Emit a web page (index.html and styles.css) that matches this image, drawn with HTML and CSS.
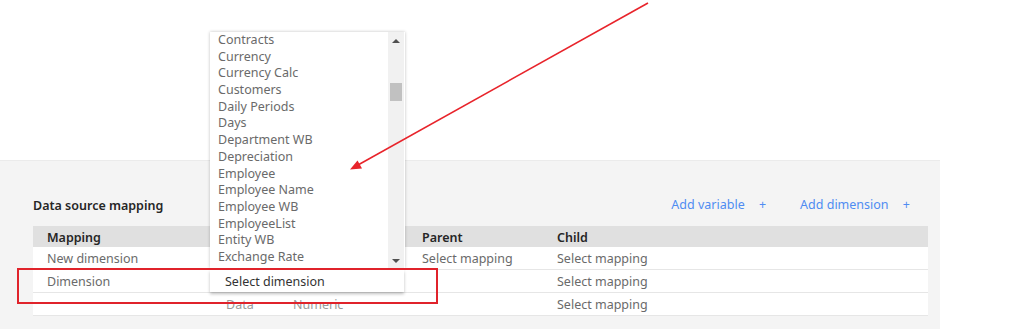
FILE: index.html
```html
<!DOCTYPE html>
<html lang="en">
<head>
    <meta charset="UTF-8">
    <meta name="viewport" content="width=device-width, initial-scale=1.0">
    <title>Data source mapping</title>
    <link rel="stylesheet" href="styles.css">
</head>
<body>

    <div class="page">
        <div class="panel">
            <div class="panel-head">
                <h2>Data source mapping</h2>
                <div class="actions">
                    <a class="add-link">Add variable <span class="plus">+</span></a>
                    <a class="add-link">Add dimension <span class="plus">+</span></a>
                </div>
            </div>

            <div class="mapping-table">
                <div class="row header">
                    <div>Mapping</div>
                    <div></div>
                    <div></div>
                    <div>Parent</div>
                    <div>Child</div>
                </div>
                <div class="row">
                    <div>New dimension</div>
                    <div></div>
                    <div></div>
                    <div>Select mapping</div>
                    <div>Select mapping</div>
                </div>
                <div class="row">
                    <div>Dimension</div>
                    <div></div>
                    <div></div>
                    <div></div>
                    <div>Select mapping</div>
                </div>
                <div class="row faded">
                    <div></div>
                    <div>Data</div>
                    <div>Numeric</div>
                    <div></div>
                    <div class="plain">Select mapping</div>
                </div>
            </div>
        </div>
    </div>

    <!-- Opened dimension dropdown -->
    <div class="dropdown-list">
        <ul>
            <li>Contracts</li>
            <li>Currency</li>
            <li>Currency Calc</li>
            <li>Customers</li>
            <li>Daily Periods</li>
            <li>Days</li>
            <li>Department WB</li>
            <li>Depreciation</li>
            <li>Employee</li>
            <li>Employee Name</li>
            <li>Employee WB</li>
            <li>EmployeeList</li>
            <li>Entity WB</li>
            <li>Exchange Rate</li>
            <li>Exchange Rate Type</li>
        </ul>
        <div class="scrollbar">
            <span class="arrow-up"></span>
            <span class="thumb"></span>
            <span class="arrow-down"></span>
        </div>
    </div>
    <div class="dropdown-select">Select dimension</div>

    <!-- Annotation -->
    <div class="highlight-box"></div>
    <svg class="annotation" width="1024" height="329" viewBox="0 0 1024 329">
        <line x1="648" y1="3" x2="358" y2="165" stroke="#e8242b" stroke-width="1.6"/>
        <polygon points="350,169.5 357.5,160.5 362,168.5" fill="#e8242b"/>
    </svg>

</body>
</html>
```

FILE: styles.css
```css
/* Page */
body {
    margin: 0;
    background-color: #fff;
    font-family: "Noto Sans", Arial, sans-serif;
    font-size: 12.5px;
    color: #6a6a6a;
    width: 1024px;
    height: 329px;
    overflow: hidden;
    position: relative;
}

.page {
    padding-top: 160px;
}

.panel {
    width: 940px;
    height: 169px;
    background-color: #f4f4f4;
    border-top: 1px solid #ebebeb;
    box-sizing: border-box;
    padding: 0 12px 0 33px;
}

.panel-head {
    display: flex;
    justify-content: space-between;
    align-items: center;
    height: 65px;
}

.panel-head h2 {
    margin: 23px 0 0;
    font-size: 12.5px;
    font-weight: 600;
    color: #262626;
}

.actions {
    display: flex;
    gap: 34px;
    margin: 22px 18px 0 0;
}

.add-link {
    color: #4f8cf2;
    font-size: 12.5px;
}

.add-link .plus {
    margin-left: 11px;
}

/* Table */
.mapping-table {
    width: 895px;
}

.row {
    display: grid;
    grid-template-columns: 179px 67px 129px 135px 1fr;
    height: 22px;
    align-items: center;
    background-color: #fff;
    border-bottom: 1px solid #e6e6e6;
}

.row > div {
    padding: 1px 0 0 14px;
    white-space: nowrap;
}

.row.header {
    height: 21px;
    background-color: #e0e0e0;
    border-bottom: none;
    font-weight: 600;
    color: #262626;
}

.row.faded > div {
    color: #9a9a9a;
}

.row.faded > div.plain {
    color: #6a6a6a;
}

/* Dropdown overlay */
.dropdown-list {
    position: absolute;
    left: 210px;
    top: 32px;
    width: 195px;
    height: 236px;
    background-color: #fff;
    box-shadow: 0 0 3px rgba(0, 0, 0, 0.25);
    overflow: hidden;
}

.dropdown-list ul {
    list-style: none;
    margin: 0;
    padding: 0 0 0 8px;
}

.dropdown-list li {
    height: 16.7px;
    line-height: 16.7px;
    white-space: nowrap;
}

.scrollbar {
    position: absolute;
    top: 0;
    right: 1px;
    width: 16px;
    height: 100%;
    background-color: #f1f1f1;
}

.arrow-up, .arrow-down {
    position: absolute;
    left: 4px;
    width: 0;
    height: 0;
    border-left: 4px solid transparent;
    border-right: 4px solid transparent;
}

.arrow-up {
    top: 7px;
    border-bottom: 4px solid #505050;
}

.arrow-down {
    bottom: 5px;
    border-top: 4px solid #505050;
}

.thumb {
    position: absolute;
    left: 2px;
    top: 51px;
    width: 12px;
    height: 18px;
    background-color: #c1c1c1;
}

.dropdown-select {
    position: absolute;
    left: 210px;
    top: 270px;
    width: 194px;
    height: 22px;
    line-height: 24px;
    padding-left: 15px;
    box-sizing: border-box;
    background-color: #fff;
    color: #333;
    box-shadow: 0 2px 3px rgba(0, 0, 0, 0.25);
}

/* Annotation */
.highlight-box {
    position: absolute;
    left: 17px;
    top: 268px;
    width: 421px;
    height: 36px;
    box-sizing: border-box;
    border: 2px solid #e0232b;
}

.annotation {
    position: absolute;
    left: 0;
    top: 0;
    pointer-events: none;
}
```
